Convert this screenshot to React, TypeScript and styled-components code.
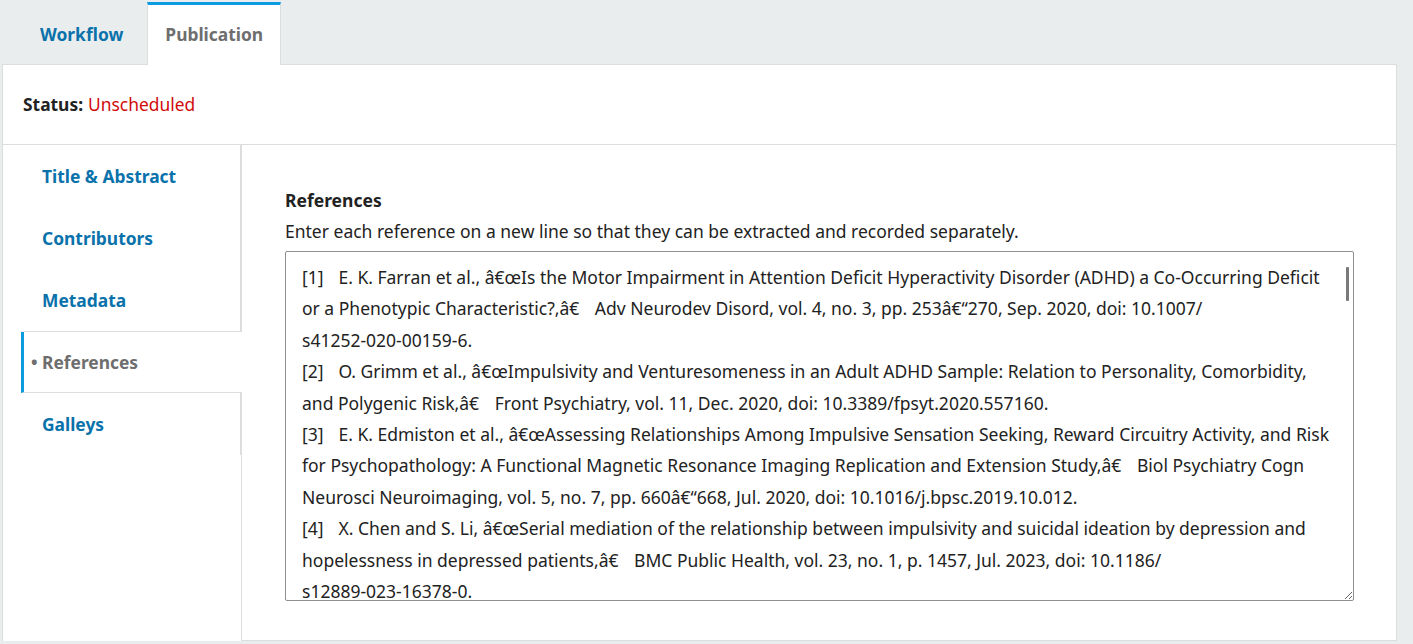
import React, { useState } from "react";
import styled, { createGlobalStyle } from "styled-components";

const GlobalStyle = createGlobalStyle`
  html, body { margin: 0; padding: 0; }
  body {
    background: #eaedee;
    font-family: "Noto Sans", "Open Sans", sans-serif;
    color: #222;
  }
  * { box-sizing: border-box; }
`;

const Page = styled.div`
  padding: 2px 16px 0 2px;
`;

const TabBar = styled.div`
  display: flex;
  align-items: stretch;
  height: 62px;
  padding-left: 20px;
  gap: 6px;
`;

const Tab = styled.button<{ $active?: boolean }>`
  position: relative;
  z-index: 1;
  display: flex;
  align-items: center;
  padding: 0 17px 3px;
  margin-bottom: -1px;
  font-family: inherit;
  font-size: 17.4px;
  font-weight: 700;
  cursor: pointer;
  background: ${(p) => (p.$active ? "#fff" : "transparent")};
  color: ${(p) => (p.$active ? "#6e6e6e" : "#0a72ab")};
  border: 1px solid ${(p) => (p.$active ? "#dddddd" : "transparent")};
  border-top: 3px solid ${(p) => (p.$active ? "#0a9be0" : "transparent")};
  border-bottom: none;
`;

const Panel = styled.div`
  background: #fff;
  border: 1px solid #dddddd;
  border-bottom: none;
`;

const StatusRow = styled.div`
  display: flex;
  align-items: center;
  height: 80px;
  padding: 0 20px 1px;
  border-bottom: 1px solid #dddddd;
  font-size: 17.4px;
`;

const StatusLabel = styled.strong`
  font-weight: 700;
  color: #222;
  margin-right: 5px;
`;

const StatusValue = styled.span`
  color: #d00a0a;
`;

const Body = styled.div`
  display: flex;
  align-items: stretch;
`;

const SideNav = styled.nav`
  width: 238px;
  flex-shrink: 0;
  padding-left: 18px;
  display: flex;
  flex-direction: column;
`;

const NavItem = styled.a<{ $active?: boolean; $before?: boolean }>`
  position: relative;
  display: flex;
  align-items: center;
  height: ${(p) => (p.$active ? "61px" : p.$before ? "63px" : "62px")};
  padding-left: 18px;
  font-size: 17.4px;
  font-weight: 700;
  text-decoration: none;
  cursor: pointer;
  color: ${(p) => (p.$active ? "#6e6e6e" : "#0a72ab")};
  background: #fff;
  border-left: 3px solid ${(p) => (p.$active ? "#0a9be0" : "transparent")};
  border-bottom: ${(p) => (p.$active || p.$before ? "1px solid #dddddd" : "none")};
  border-right: ${(p) => (p.$active ? "none" : "1px solid #dddddd")};
  margin-right: ${(p) => (p.$active ? "-1px" : "0")};
  z-index: ${(p) => (p.$active ? 1 : 0)};

  &::before {
    content: ${(p) => (p.$active ? '"•"' : "none")};
    display: inline-block;
    width: 11px;
    margin-left: -11px;
    color: #6e6e6e;
  }
`;

const Content = styled.div`
  flex: 1;
  border-left: 1px solid #dddddd;
  display: flex;
  flex-direction: column;
`;

const Form = styled.div`
  padding: 42px 42px 39px 43px;
`;

const FieldLabel = styled.label`
  display: block;
  font-size: 17.5px;
  font-weight: 700;
  line-height: 26px;
  margin-bottom: 5px;
  color: #222;
`;

const FieldHint = styled.div`
  font-size: 17.5px;
  line-height: 26px;
  color: #222;
  margin-bottom: 7px;
`;

const TextareaWrap = styled.div`
  position: relative;
`;

const RefsArea = styled.textarea`
  display: block;
  width: 100%;
  height: 350px;
  padding: 10px 22px 10px 16px;
  border: 1px solid #8f8f8f;
  border-radius: 2px;
  font-family: "Noto Sans", "Open Sans", sans-serif;
  font-size: 17.5px;
  line-height: 31.4px;
  color: #222;
  background: #fff;
  resize: vertical;
  overflow: hidden;
  tab-size: 4;
  outline: none;
`;

const ScrollThumb = styled.div`
  position: absolute;
  top: 16px;
  right: 5px;
  width: 3px;
  height: 34px;
  border-radius: 1px;
  background: #7a7a7a;
  pointer-events: none;
`;

const Footer = styled.div`
  border-top: 1px solid #dddddd;
`;

// doi links break after the slash only, as in the original form
const doi = (s: string) => s.replace("/", "/\u200b").replace(/-/g, "-\u2060");

const references = [
  "[1]\tE. K. Farran et al., \u00e2\u20ac\u0153Is the Motor Impairment in Attention Deficit Hyperactivity Disorder (ADHD) a Co-Occurring Deficit or a Phenotypic Characteristic?,\u00e2\u20ac\u009d Adv Neurodev Disord, vol. 4, no. 3, pp. 253\u00e2\u20ac\u201c270, Sep. 2020, doi: " + doi("10.1007/s41252-020-00159-6."),
  "[2]\tO. Grimm et al., \u00e2\u20ac\u0153Impulsivity and Venturesomeness in an Adult ADHD Sample: Relation to Personality, Comorbidity, and Polygenic Risk,\u00e2\u20ac\u009d Front Psychiatry, vol. 11, Dec. 2020, doi: " + doi("10.3389/fpsyt.2020.557160."),
  "[3]\tE. K. Edmiston et al., \u00e2\u20ac\u0153Assessing Relationships Among Impulsive Sensation Seeking, Reward Circuitry Activity, and Risk for Psychopathology: A Functional Magnetic Resonance Imaging Replication and Extension Study,\u00e2\u20ac\u009d Biol Psychiatry Cogn Neurosci Neuroimaging, vol. 5, no. 7, pp. 660\u00e2\u20ac\u201c668, Jul. 2020, doi: " + doi("10.1016/j.bpsc.2019.10.012."),
  "[4]\tX. Chen and S. Li, \u00e2\u20ac\u0153Serial mediation of the relationship between impulsivity and suicidal ideation by depression and hopelessness in depressed patients,\u00e2\u20ac\u009d BMC Public Health, vol. 23, no. 1, p. 1457, Jul. 2023, doi: " + doi("10.1186/s12889-023-16378-0."),
];

const navItems = ["Title & Abstract", "Contributors", "Metadata", "References", "Galleys"];

const App: React.FC = () => {
  const [tab, setTab] = useState("Publication");
  const [section, setSection] = useState("References");
  const [value, setValue] = useState(references.join("\n"));
  const activeIndex = navItems.indexOf(section);

  return (
    <>
      <GlobalStyle />
      <Page>
        <TabBar>
          {["Workflow", "Publication"].map((t) => (
            <Tab key={t} $active={tab === t} onClick={() => setTab(t)}>
              {t}
            </Tab>
          ))}
        </TabBar>
        <Panel>
          <StatusRow>
            <StatusLabel>Status:</StatusLabel>
            <StatusValue>Unscheduled</StatusValue>
          </StatusRow>
          <Body>
            <SideNav>
              {navItems.map((item, i) => (
                <NavItem
                  key={item}
                  $active={section === item}
                  $before={i === activeIndex - 1}
                  onClick={() => setSection(item)}
                >
                  {item}
                </NavItem>
              ))}
            </SideNav>
            <Content>
              <Form>
                <FieldLabel htmlFor="refs">References</FieldLabel>
                <FieldHint>
                  Enter each reference on a new line so that they can be extracted and recorded separately.
                </FieldHint>
                <TextareaWrap>
                  <RefsArea id="refs" value={value} onChange={(e) => setValue(e.target.value)} />
                  <ScrollThumb />
                </TextareaWrap>
              </Form>
              <Footer />
            </Content>
          </Body>
        </Panel>
      </Page>
    </>
  );
};

export default App;
